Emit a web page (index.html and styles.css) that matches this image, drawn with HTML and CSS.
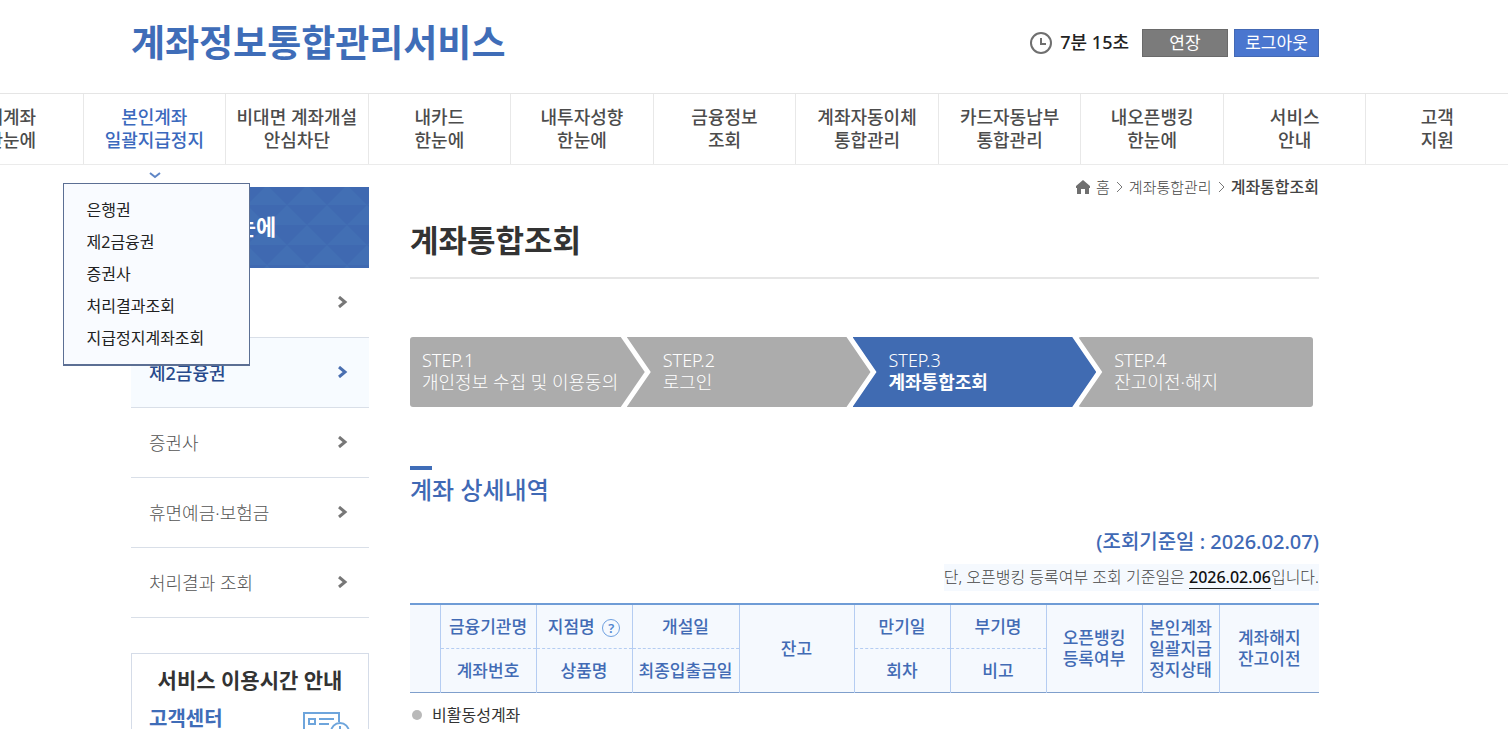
FILE: index.html
```html
<!DOCTYPE html>
<html lang="ko">
<head>
    <meta charset="UTF-8">
    <meta name="viewport" content="width=device-width, initial-scale=1.0">
    <title>계좌정보통합관리서비스</title>
    <link rel="stylesheet" href="styles.css">
</head>
<body>
    <div class="page">
        <header class="header container">
            <a href="#" class="logo">계좌정보통합관리서비스</a>
            <div class="session">
                <svg class="clock" width="24" height="24" viewBox="0 0 24 24" fill="none" stroke="#6f6f6f">
                    <circle cx="12" cy="12" r="10" stroke-width="2"/>
                    <path d="M12 7v6h5" stroke-width="2"/>
                </svg>
                <span class="time">7분 15초</span>
                <button type="button" class="btn">연장</button>
                <button type="button" class="btn btn-blue">로그아웃</button>
            </div>
        </header>

        <nav class="gnb">
            <div class="gnb-item"><a href="#">내계좌<br>한눈에</a></div>
            <div class="gnb-item on">
                <a href="#">본인계좌<br>일괄지급정지</a>
                <svg class="gnb-arrow" width="12" height="7" viewBox="0 0 12 7" fill="none" stroke="#5f86c6" stroke-width="2"><path d="M1 1l5 4 5-4"/></svg>
                <ul class="submenu">
                    <li><a href="#">은행권</a></li>
                    <li><a href="#">제2금융권</a></li>
                    <li><a href="#">증권사</a></li>
                    <li><a href="#">처리결과조회</a></li>
                    <li><a href="#">지급정지계좌조회</a></li>
                </ul>
            </div>
            <div class="gnb-item"><a href="#">비대면 계좌개설<br>안심차단</a></div>
            <div class="gnb-item"><a href="#">내카드<br>한눈에</a></div>
            <div class="gnb-item"><a href="#">내투자성향<br>한눈에</a></div>
            <div class="gnb-item"><a href="#">금융정보<br>조회</a></div>
            <div class="gnb-item"><a href="#">계좌자동이체<br>통합관리</a></div>
            <div class="gnb-item"><a href="#">카드자동납부<br>통합관리</a></div>
            <div class="gnb-item"><a href="#">내오픈뱅킹<br>한눈에</a></div>
            <div class="gnb-item"><a href="#">서비스<br>안내</a></div>
            <div class="gnb-item"><a href="#">고객<br>지원</a></div>
        </nav>

        <div class="body container">
            <aside class="side">
                <h2 class="side-title">
                    <svg class="side-pattern" width="100%" height="100%">
                        <defs>
                            <pattern id="tri" x="-4" y="-2" width="40" height="40" patternUnits="userSpaceOnUse">
                                <path d="M0 20L20 0l20 20z" fill="#426fb4"/>
                                <path d="M-20 40L0 20l20 20zM20 40l20-20 20 20z" fill="#426fb4"/>
                            </pattern>
                        </defs>
                        <rect width="100%" height="100%" fill="url(#tri)"/>
                    </svg>
                    <span>내계좌 한눈에</span>
                </h2>
                <ul class="side-menu">
                    <li><a href="#">은행권<svg width="10" height="12" viewBox="0 0 10 12"><path d="M1 1l6 5-6 5"/></svg></a></li>
                    <li class="on"><a href="#">제2금융권<svg width="10" height="12" viewBox="0 0 10 12"><path d="M1 1l6 5-6 5"/></svg></a></li>
                    <li><a href="#">증권사<svg width="10" height="12" viewBox="0 0 10 12"><path d="M1 1l6 5-6 5"/></svg></a></li>
                    <li><a href="#">휴면예금·보험금<svg width="10" height="12" viewBox="0 0 10 12"><path d="M1 1l6 5-6 5"/></svg></a></li>
                    <li><a href="#">처리결과 조회<svg width="10" height="12" viewBox="0 0 10 12"><path d="M1 1l6 5-6 5"/></svg></a></li>
                </ul>
                <div class="service">
                    <h3>서비스 이용시간 안내</h3>
                    <div class="service-row">
                        <strong>고객센터</strong>
                        <svg width="48" height="36" viewBox="0 0 48 36" fill="none" stroke="#6ea5dc" stroke-width="2">
                            <path d="M26 27H1V1h35v9"/>
                            <path d="M6 7h6v5H6zM16 7h15M16 12h10M6 18h16"/>
                            <circle cx="37" cy="20" r="9"/>
                            <path d="M37 14v7h5"/>
                        </svg>
                    </div>
                </div>
            </aside>

            <main class="content">
                <div class="breadcrumb">
                    <svg width="14" height="14" viewBox="0 0 14 14" fill="#6f6f6f"><path d="M7 0L0 6v2h1v6h4V9h4v5h4V8h1V6z"/></svg>
                    <a href="#">홈</a>
                    <svg width="7" height="12" viewBox="0 0 7 12" fill="none" stroke="#777"><path d="M1 1l5 5-5 5"/></svg>
                    <a href="#">계좌통합관리</a>
                    <svg width="7" height="12" viewBox="0 0 7 12" fill="none" stroke="#777"><path d="M1 1l5 5-5 5"/></svg>
                    <strong>계좌통합조회</strong>
                </div>
                <h1>계좌통합조회</h1>

                <ol class="steps">
                    <li>STEP.1<br>개인정보 수집 및 이용동의</li>
                    <li>STEP.2<br>로그인</li>
                    <li class="on">STEP.3<br><strong>계좌통합조회</strong></li>
                    <li>STEP.4<br>잔고이전·해지</li>
                </ol>

                <h2 class="section-title">계좌 상세내역</h2>
                <p class="base-date">(조회기준일 : 2026.02.07)</p>
                <p class="note"><span>단, 오픈뱅킹 등록여부 조회 기준일은 <strong>2026.02.06</strong>입니다.</span></p>

                <table class="accounts">
                    <colgroup>
                        <col class="c-check"><col class="c-mid"><col class="c-mid"><col class="c-date"><col class="c-balance">
                        <col class="c-mid"><col class="c-mid"><col class="c-mid"><col class="c-status"><col>
                    </colgroup>
                    <thead>
                        <tr>
                            <th rowspan="2"></th>
                            <th class="top">금융기관명</th>
                            <th class="top">지점명
                                <button type="button" class="help" aria-label="도움말">?</button>
                            </th>
                            <th class="top">개설일</th>
                            <th rowspan="2">잔고</th>
                            <th class="top">만기일</th>
                            <th class="top">부기명</th>
                            <th rowspan="2">오픈뱅킹<br>등록여부</th>
                            <th rowspan="2">본인계좌<br>일괄지급<br>정지상태</th>
                            <th rowspan="2">계좌해지<br>잔고이전</th>
                        </tr>
                        <tr>
                            <th>계좌번호</th>
                            <th>상품명</th>
                            <th>최종입출금일</th>
                            <th>회차</th>
                            <th>비고</th>
                        </tr>
                    </thead>
                </table>
                <p class="legend">비활동성계좌</p>
            </main>
        </div>
    </div>
</body>
</html>
```
FILE: styles.css
```css
* {
    box-sizing: border-box;
}
body {
    margin: 0;
    font-family: "Noto Sans", "Noto Sans CJK KR", sans-serif;
    font-size: 16px;
    color: #444;
    background: #fff;
    overflow-x: hidden;
}
h1, h2, h3, p, ul, ol {
    margin: 0;
    padding: 0;
}
ul, ol {
    list-style: none;
}
a {
    color: inherit;
    text-decoration: none;
}
button {
    font-family: inherit;
    padding: 0;
    cursor: pointer;
}
.page {
    margin-left: -58px;
}
.container {
    max-width: 1188px;
    margin: 0 auto;
}

/* header */
.header {
    display: flex;
    justify-content: space-between;
    align-items: center;
    height: 93px;
    padding-bottom: 8px;
}
.logo {
    font-size: 37px;
    font-weight: 700;
    line-height: 50px;
    color: #3f6db8;
}
.session {
    display: flex;
    align-items: center;
}
.time {
    margin: 0 13px 0 7px;
    font-size: 18px;
    font-weight: 500;
    line-height: 26px;
    padding-bottom: 2px;
    color: #222;
}
.btn {
    width: 86px;
    height: 28px;
    border: 1px solid #6a6a6a;
    background: #7b7b7b;
    color: #fff;
    font-size: 17px;
    line-height: 24px;
}
.btn-blue {
    width: 85px;
    margin-left: 6px;
    border-color: #4469b4;
    background: #4a76cf;
}

/* main menu */
.gnb {
    display: grid;
    grid-template-columns: repeat(11, 1fr);
    margin-left: -2px;
    border-top: 1px solid #e5e5e5;
    border-bottom: 1px solid #ebebeb;
}
.gnb-item {
    position: relative;
    padding: 12px 0;
    text-align: center;
    font-size: 18px;
    font-weight: 500;
    line-height: 23px;
    color: #4c4c4c;
    white-space: nowrap;
}
.gnb-item + .gnb-item {
    border-left: 1px solid #e8e8e8;
}
.gnb-item > a {
    display: block;
}
.gnb-item.on > a {
    color: #3b69bd;
}
.gnb-arrow {
    position: absolute;
    left: 65px;
    top: 78px;
}
.submenu {
    position: absolute;
    z-index: 10;
    left: -21px;
    top: 89px;
    width: 187px;
    padding: 10px 23px;
    border: 1px solid #5c6f94;
    border-bottom-width: 2px;
    background: #f9fbff;
    text-align: left;
    font-size: 16px;
    font-weight: 400;
    line-height: 32px;
    color: #222;
}

/* left menu */
.body {
    display: flex;
    gap: 41px;
}
.side {
    flex: none;
    width: 238px;
    padding-top: 22px;
}
.side-title {
    position: relative;
    height: 81px;
    padding-left: 18px;
    background: #3f69b1;
    color: #fff;
    font-size: 22px;
    font-weight: 700;
    line-height: 78px;
}
.side-title span {
    position: relative;
}
.side-pattern {
    position: absolute;
    left: 0;
    top: 0;
}
.side-menu a {
    display: flex;
    justify-content: space-between;
    align-items: center;
    height: 70px;
    padding: 0 21px 2px 18px;
    border-bottom: 1px solid #d9dfe8;
    font-size: 18px;
    font-weight: 300;
    color: #555;
}
.side-menu svg {
    fill: none;
    stroke: #777;
    stroke-width: 3;
}
.side-menu .on a {
    background: #f7fbff;
    font-weight: 500;
    color: #274a8c;
}
.side-menu .on svg {
    stroke: #4a6fb0;
}
.service {
    height: 160px;
    margin-top: 35px;
    padding: 12px 17px;
    border: 1px solid #d5dce8;
}
.service h3 {
    font-size: 21px;
    font-weight: 700;
    line-height: 28px;
    text-align: center;
    color: #333;
}
.service-row {
    display: flex;
    justify-content: space-between;
    margin-top: 10px;
}
.service-row strong {
    font-size: 20px;
    line-height: 30px;
    color: #3f6db8;
}
.service-row svg {
    margin-top: 8px;
}

/* content */
.content {
    flex: 1;
    min-width: 0;
}
.breadcrumb {
    display: flex;
    justify-content: flex-end;
    align-items: center;
    gap: 6px;
    padding-top: 11px;
    font-size: 15px;
    font-weight: 300;
    line-height: 22px;
    color: #444;
}
.breadcrumb strong {
    font-size: 16px;
    font-weight: 500;
}
h1 {
    padding: 19px 0 14px;
    border-bottom: 2px solid #e6e6e6;
    font-size: 31px;
    font-weight: 700;
    line-height: 46px;
    color: #333;
}
.steps {
    display: grid;
    grid-template-columns: 211fr 220fr 220fr 235fr;
    gap: 6px;
    margin: 58px 6px 0 0;
    color: #fff;
    font-size: 18px;
    font-weight: 300;
    line-height: 22px;
    white-space: nowrap;
}
.steps li {
    height: 70px;
    margin-right: -24px;
    padding: 12px 0 0 36px;
    background: #acacac;
    clip-path: polygon(0 0, calc(100% - 24px) 0, 100% 50%, calc(100% - 24px) 100%, 0 100%, 24px 50%);
}
.steps li:first-child {
    padding-left: 12px;
    border-radius: 3px;
    clip-path: polygon(0 0, calc(100% - 24px) 0, 100% 50%, calc(100% - 24px) 100%, 0 100%);
}
.steps li:last-child {
    margin-right: 0;
    border-radius: 3px;
    clip-path: polygon(0 0, 100% 0, 100% 100%, 0 100%, 24px 50%);
}
.steps .on {
    background: #406bb2;
}
.steps strong {
    font-weight: 700;
}
.section-title {
    margin-top: 59px;
    font-size: 24px;
    font-weight: 500;
    line-height: 34px;
    color: #3f69b5;
}
.section-title::before {
    content: "";
    display: block;
    width: 22px;
    height: 4px;
    margin-bottom: 3px;
    background: #3f6db8;
}
.base-date {
    margin-top: 20px;
    text-align: right;
    font-size: 20px;
    font-weight: 500;
    line-height: 30px;
    color: #3f69b5;
}
.note {
    display: flex;
    justify-content: flex-end;
    margin: 7px 0 12px;
    font-size: 16px;
    font-weight: 300;
    line-height: 27px;
    color: #444;
}
.note span {
    background: #f5f9fe;
}
.note strong {
    border-bottom: 1px solid #222;
    font-weight: 500;
    color: #111;
}
.accounts {
    width: 100%;
    table-layout: fixed;
    border-collapse: collapse;
    border-top: 2px solid #6f9cd6;
    border-bottom: 1px solid #7f9fcc;
    background: #f5f9fe;
}
.accounts th {
    height: 44px;
    padding: 0;
    border-left: 1px solid #b5cdf2;
    font-size: 17px;
    font-weight: 500;
    line-height: 21px;
    color: #426bb5;
    white-space: nowrap;
}
.accounts tr:first-child th:first-child {
    border-left: 0;
}
.accounts .top {
    border-bottom: 1px dashed #b5cdf2;
}
.c-check {
    width: 30px;
}
.c-mid {
    width: 96px;
}
.c-date {
    width: 107px;
}
.c-balance {
    width: 115px;
}
.c-status {
    width: 77px;
}
.help {
    width: 18px;
    height: 18px;
    margin-left: 3px;
    border: 1px solid #6fa0e0;
    border-radius: 50%;
    background: none;
    color: #4f86d0;
    font-size: 13px;
    font-weight: 600;
    line-height: 15px;
}
.legend {
    display: flex;
    align-items: center;
    gap: 10px;
    padding: 10px 0 30px 2px;
    font-weight: 400;
    line-height: 24px;
    color: #333;
}
.legend::before {
    content: "";
    width: 10px;
    height: 10px;
    border-radius: 50%;
    background: #b9b9b9;
}
```
